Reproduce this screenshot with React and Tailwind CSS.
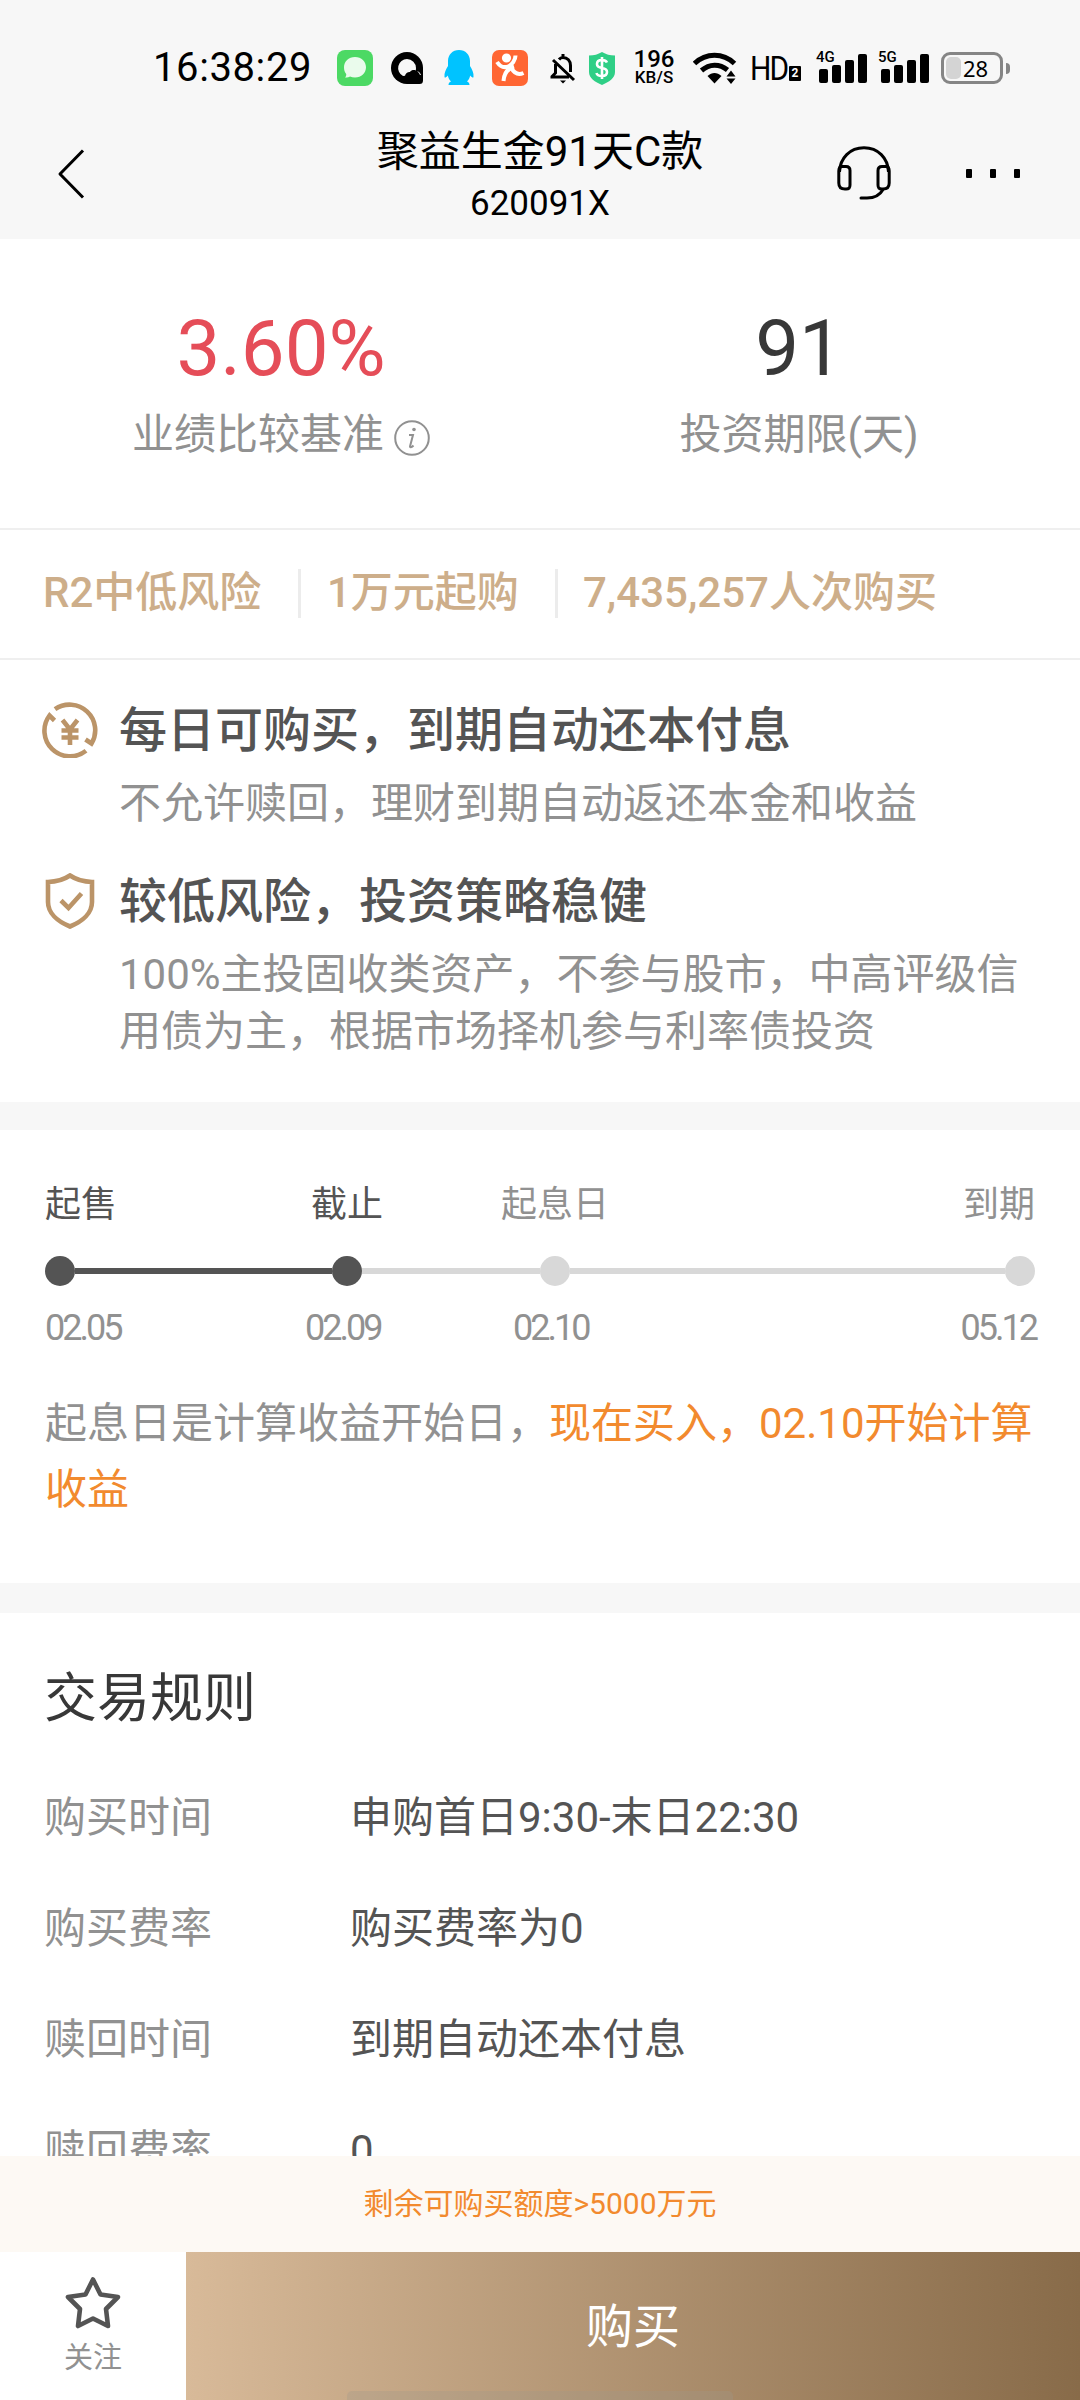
import React from "react";

const FEATURES = [
  {
    icon: <YuanIcon />,
    title: "每日可购买，到期自动还本付息",
    lines: ["不允许赎回，理财到期自动返还本金和收益"],
  },
  {
    icon: <ShieldIcon />,
    title: "较低风险，投资策略稳健",
    lines: [
      "100%主投固收类资产，不参与股市，中高评级信",
      "用债为主，根据市场择机参与利率债投资",
    ],
  },
];

const RULES = [
  { label: "购买时间", value: "申购首日9:30-末日22:30" },
  { label: "购买费率", value: "购买费率为0" },
  { label: "赎回时间", value: "到期自动还本付息" },
  { label: "赎回费率", value: "0" },
];

function YuanIcon() {
  return (
    <svg width="56" height="56" viewBox="0 0 56 56" fill="none" stroke="#bb9468" strokeWidth="4.600">
      <path d="M13 7.2A25.6 25.6 0 0 1 49.5 41.5L43.5 37.5" />
      <path d="M44 48.8A25.6 25.6 0 0 1 7.5 13.5L12.5 18.5" />
      <path d="M20.5 18l7.5 9.5 7.5-9.5M19.5 28.5h17M19.5 35.5h17M28 27v16" />
    </svg>
  );
}

function ShieldIcon() {
  return (
    <svg width="56" height="56" viewBox="0 0 56 56" fill="none" stroke="#bb9468" strokeWidth="4.600">
      <path d="M28 2.5C22 6.500 14 8.800 6 9V29C6 40 15.500 48.500 28 53.500C40.500 48.500 50 40 50 29V9C42 8.800 34 6.500 28 2.500Z" />
      <path d="M19 27.500l7.500 7.500L39.500 20.500" />
    </svg>
  );
}

function SignalBars({ label }) {
  return (
    <div className="relative flex items-end gap-1 w-12 h-[29px]">
      <div className="absolute -left-[3px] -top-[4px] text-[15px] leading-[15px] font-medium">{label}</div>
      <div className="w-[9px] h-[14px] rounded-[2px] bg-black" />
      <div className="w-[9px] h-[18px] rounded-[2px] bg-black" />
      <div className="w-[9px] h-[23px] rounded-[2px] bg-black" />
      <div className="w-[9px] h-[29px] rounded-[2px] bg-black" />
    </div>
  );
}

function StatusBar() {
  return (
    <div className="flex items-center h-[118px] pt-[18px] pl-[153px] text-black whitespace-nowrap">
      <div className="w-[184px] text-[40px] leading-[48px] tracking-[0.6px]">16:38:29</div>

      {/* messages */}
      <svg width="36" height="36" viewBox="0 0 36 36">
        <rect width="36" height="36" rx="8" fill="#4cd964" />
        <path d="M18 7c6.500 0 11 4.600 11 10.200S24.500 27.400 18 27.400c-1.800 0-3.500-.3-5-1-1.300.9-3 1.200-5 1.100 1.100-1 1.400-2.200 1.200-3.500C7.700 22.200 7 19.800 7 17.200 7 11.600 11.500 7 18 7z" fill="#eafbec" />
      </svg>

      {/* browser */}
      <svg className="ml-[18px]" width="32" height="32" viewBox="0 0 32 32">
        <path d="M16 0a16 16 0 0 1 16 16v12.500a3.500 3.500 0 0 1-3.500 3.500H16a16 16 0 0 1 0-32z" fill="#000" />
        <path d="M16 7a9 9 0 0 1 9 9l-.2 2.500c-1.800-.9-4.600-.5-5.800 1.500-2-.3-4.500 1-5 3.800L12 24A9 9 0 0 1 16 7z" fill="#f7f7f7" />
        <path d="M27 19.500c1.200 1 2 2 2.500 3.500" stroke="#f7f7f7" strokeWidth="1" fill="none" />
      </svg>

      {/* qq */}
      <svg className="ml-[21px]" width="30" height="36" viewBox="0 0 30 36" fill="#00c3ff">
        <path d="M15 0c6.500 0 11 4.800 11 11v5c2 3 4 7 3.500 11-.2 1-1.500.8-3.300-1.500-.5 2.500-1.700 4.500-3.200 6 1.500.6 2.500 1.500 2.500 3.500H4.500c0-2 1-2.900 2.500-3.500-1.500-1.500-2.700-3.500-3.200-6C2 27.800.7 28 .5 27 0 23 2 19 4 16v-5C4 4.800 8.500 0 15 0z" />
      </svg>

      {/* dianping */}
      <svg className="ml-[18px]" width="36" height="36" viewBox="0 0 36 36" fill="none" stroke="#fff" strokeWidth="4">
        <rect width="36" height="36" rx="7" fill="#ff6633" stroke="none" />
        <circle cx="14.500" cy="8" r="4.600" fill="#fff" stroke="none" />
        <path d="M5 12c3 4.500 7 6 11 4.500S23.500 10 23.500 5.500M22 16.500c-6 2-10 7-10.500 14.500M19 17.500c3 5.500 7 8 12.500 5.500" />
      </svg>

      {/* muted bell */}
      <svg className="ml-[22px]" width="26" height="31" viewBox="0 0 26 31" fill="none" stroke="#000" strokeWidth="3">
        <path d="M9 6.500c1-1.300 2.500-2 4-2 4.500 0 7.500 3.500 7.500 8V19M5.500 11v9L2 23.500V24h17M13 5V1M3 7l21 20" />
        <path d="M10 27.500h6l-3 3z" fill="#000" stroke="none" />
      </svg>

      {/* payment shield */}
      <svg className="ml-[12px]" width="28" height="33" viewBox="0 0 28 33" fill="none">
        <path d="M14 0C10 2.500 6 3.500 1 3.500V20c0 6 6 10 13 13 7-3 13-7 13-13V3.500C22 3.500 18 2.500 14 0z" fill="#2fcf86" />
        <path d="M19 10.500C18 8.500 16 8 14 8c-3 0-5 1.500-5 4s2 3.500 5 4 5 1.500 5 4-2 4-5 4-5-1-5.500-3M14 5v22" stroke="#fff" strokeWidth="2.600" />
      </svg>

      <div className="ml-[17px] w-[42px] text-center font-medium">
        <div className="text-[24px] leading-[19px]">196</div>
        <div className="text-[17px] leading-[17px]">KB/S</div>
      </div>

      {/* wifi */}
      <svg className="ml-[18px]" width="44" height="32" viewBox="0 0 44 32" fill="none" stroke="#000" strokeWidth="5">
        <path d="M1.500 11.500C13 .5 30 .5 41.500 11.500" />
        <path d="M8.500 18.500c8-7 18-7 26-.5" />
        <path d="M14.500 24c4.500-4 9.500-4 14 0l-7 7.500z" fill="#000" stroke="none" />
        <path d="M33.500 24.500l4.500-6 4.500 6zM33.500 26.500l4.500 5.500 4.500-5.500z" fill="#000" stroke="none" />
      </svg>

      <div className="ml-[13px] text-[34px] leading-[34px] tracking-[-2px] w-[39px] origin-left scale-x-[0.88]">HD</div>
      <div className="mt-[10px] w-[12px] h-[15px] bg-black text-white text-[12px] leading-[15px] text-center font-bold rounded-[1px]">2</div>

      <div className="ml-[18px]">
        <SignalBars label="4G" />
      </div>
      <div className="ml-[14px]">
        <SignalBars label="5G" />
      </div>

      {/* battery */}
      <div className="ml-[12px] flex items-center w-[62px] h-8 rounded-[9px] border-[3px] border-[#858585] pl-[2px]">
        <div className="w-[15px] h-[22px] rounded-[5px] bg-[#d4d4d4]" />
        <div className="ml-[2px] text-[22px] leading-[24px] font-['Noto_Sans']">28</div>
      </div>
      <div className="ml-[3px] w-1 h-[11px] rounded-r-full bg-[#858585]" />
    </div>
  );
}

function NavBar() {
  return (
    <div className="flex items-start justify-between h-[120px] pl-[57px] pr-[60px] text-black">
      <svg className="mt-[31px]" width="28" height="50" viewBox="0 0 28 50" fill="none" stroke="#000" strokeWidth="3">
        <path d="M26 1.500L3 25l23 23.500" strokeLinejoin="round" />
      </svg>
      <div className="ml-[158px] mt-[6px] text-center">
        <div className="text-[42px] leading-[56px]">聚益生金91天C款</div>
        <div className="text-[35px] leading-[48px]">620091X</div>
      </div>
      <div className="flex items-center mt-[28px]">
        <svg width="54" height="54" viewBox="0 0 54 54" fill="none" stroke="#000" strokeWidth="3">
          <path d="M2.500 26C3 12 13 1.800 27 1.800S51 12 51.500 26" />
          <path d="M1.800 25c0-3 1-4.500 3.500-4.500H9c3 0 4 1.200 4 4V39c0 3-1 4-3.800 4H8c-4 0-6.200-1.800-6.200-6zM52.200 25c0-3-1-4.500-3.500-4.500H45c-3 0-4 1.200-4 4V39c0 3 1 4 3.800 4H46c4 0 6.200-1.800 6.200-6z" />
          <path d="M46 43.500C43 49 38 52 30 52h-6" strokeLinecap="round" />
        </svg>
        <div className="flex gap-[18px] ml-[75px]">
          <div className="w-[6px] h-[9px] rounded-[1px] bg-black" />
          <div className="w-[6px] h-[9px] rounded-[1px] bg-black" />
          <div className="w-[6px] h-[9px] rounded-[1px] bg-black" />
        </div>
      </div>
    </div>
  );
}

function Summary() {
  return (
    <div className="flex h-[291px] pt-[62px] border-b-2 border-[#efefef]">
      <div className="flex flex-col items-center w-[562px]">
        <div className="text-[78px] leading-[96px] text-[#e54d58]">3.60%</div>
        <div className="flex items-center mt-[10px]">
          <div className="text-[42px] leading-[56px] text-[#919191]">业绩比较基准</div>
          <svg className="ml-[10px] mt-[5px]" width="36" height="36" viewBox="0 0 36 36" fill="none" stroke="#919191" strokeWidth="2">
            <circle cx="18" cy="18" r="16.800" />
            <path d="M15 15h4l-3 11.500c0 1.500 2 .5 3.500-1" />
            <circle cx="20" cy="9.500" r="1.800" fill="#919191" stroke="none" />
          </svg>
        </div>
      </div>
      <div className="flex flex-col items-center w-[474px]">
        <div className="text-[78px] leading-[96px] text-[#383838]">91</div>
        <div className="mt-[10px] text-[42px] leading-[56px] text-[#919191]">投资期限(天)</div>
      </div>
    </div>
  );
}

function Tags() {
  return (
    <div className="flex items-center h-[130px] pl-[43px] pb-[2px] border-b-2 border-[#efefef] text-[42px] leading-[56px] font-medium text-[#cdae8a] whitespace-nowrap">
      <div className="w-[255px]">R2中低风险</div>
      <div className="w-[3px] h-[49px] bg-[#ececec]" />
      <div className="w-[228px] ml-[26px]">1万元起购</div>
      <div className="w-[3px] h-[49px] bg-[#ececec]" />
      <div className="ml-[25px]">7,435,257人次购买</div>
    </div>
  );
}

function Features() {
  return (
    <div className="flex flex-col gap-[40px] h-[442px] pt-[41px] pl-[42px]">
      {FEATURES.map((f) => (
        <div key={f.title} className="flex gap-[21px]">
          <div className="w-14 mt-[1px]">{f.icon}</div>
          <div className="whitespace-nowrap">
            <div className="text-[48px] leading-[60px] font-medium text-[#545454]">{f.title}</div>
            <div className="mt-[14px] text-[42px] leading-[57px] text-[#919191]">
              {f.lines.map((line) => (
                <div key={line}>{line}</div>
              ))}
            </div>
          </div>
        </div>
      ))}
    </div>
  );
}

function Timeline() {
  return (
    <div className="h-[453px] pt-[55px] px-[45px]">
      <div className="flex text-[36px] leading-[40px] text-[#919191]">
        <div className="w-[266px] text-[#545454]">起售</div>
        <div className="w-[190px] text-[#545454]">截止</div>
        <div>起息日</div>
        <div className="ml-auto">到期</div>
      </div>
      <div className="flex items-center h-[30px] mt-[31px]">
        <div className="size-[30px] rounded-full bg-[#545454]" />
        <div className="w-[257px] h-[6px] bg-[#545454]" />
        <div className="size-[30px] rounded-full bg-[#545454]" />
        <div className="w-[178px] h-[6px] bg-[#d8d8d8]" />
        <div className="size-[30px] rounded-full bg-[#d8d8d8]" />
        <div className="flex-1 h-[6px] bg-[#d8d8d8]" />
        <div className="size-[30px] rounded-full bg-[#d8d8d8]" />
      </div>
      <div className="flex mt-[22px] text-[36px] leading-[40px] tracking-[-3px] text-[#919191]">
        <div className="w-[260px]">02.05</div>
        <div className="w-[208px]">02.09</div>
        <div>02.10</div>
        <div className="ml-auto -mr-[1px]">05.12</div>
      </div>
      <div className="mt-[43px] text-[42px] leading-[66px] text-[#919191] whitespace-nowrap">
        起息日是计算收益开始日，
        <span className="text-[#f28a2e]">
          现在买入，02.10开始计算
          <br />
          收益
        </span>
      </div>
    </div>
  );
}

function Rules() {
  return (
    <div className="flex-1 min-h-0 overflow-hidden px-[44px] pt-[50px]">
      <div className="text-[53px] leading-[72px] text-[#383838]">交易规则</div>
      <div className="mt-[27px]">
        {RULES.map((r) => (
          <div key={r.label} className="flex items-center h-[111px] text-[42px] leading-[56px]">
            <div className="w-[306px] text-[#919191]">{r.label}</div>
            <div className="text-[#545454]">{r.value}</div>
          </div>
        ))}
      </div>
    </div>
  );
}

function BottomBar() {
  return (
    <div className="relative flex h-[148px]">
      <div className="flex flex-col items-center w-[186px] pt-[24px] bg-white">
        <svg width="56" height="54" viewBox="0 0 56 54" fill="none" stroke="#545454" strokeWidth="4.600" strokeLinejoin="round">
          <path d="M28 3.500L35.500 18.500L53 21L41 33L43 50L28 42.500L13 50L15 33L3 21L20.500 18.500Z" />
        </svg>
        <div className="mt-[8px] text-[29px] leading-[40px] text-[#919191]">关注</div>
      </div>
      <button className="flex-1 pt-[2px] bg-linear-to-r from-[#d8ba99] to-[#886b49] text-[47px] leading-[60px] text-white">
        购买
      </button>
      {/* home indicator */}
      <div className="absolute bottom-0 left-[347px] w-[386px] h-[9px] rounded-t-[5px] bg-[#a0988c]/30" />
    </div>
  );
}

export default function App() {
  return (
    <div className="flex flex-col w-[1080px] h-[2400px] overflow-hidden bg-white font-['Roboto','Noto_Sans_CJK_SC',sans-serif]">
      <div className="h-[239px] bg-[#f7f7f7]">
        <StatusBar />
        <NavBar />
      </div>
      <Summary />
      <Tags />
      <Features />
      <div className="h-[28px] bg-[#f7f7f7]" />
      <Timeline />
      <div className="h-[30px] bg-[#f7f7f7]" />
      <Rules />
      <div className="flex items-center justify-center h-24 bg-[#fdf9f4] text-[30px] leading-[40px] text-[#f28a2e]">
        剩余可购买额度&gt;5000万元
      </div>
      <BottomBar />
    </div>
  );
}
